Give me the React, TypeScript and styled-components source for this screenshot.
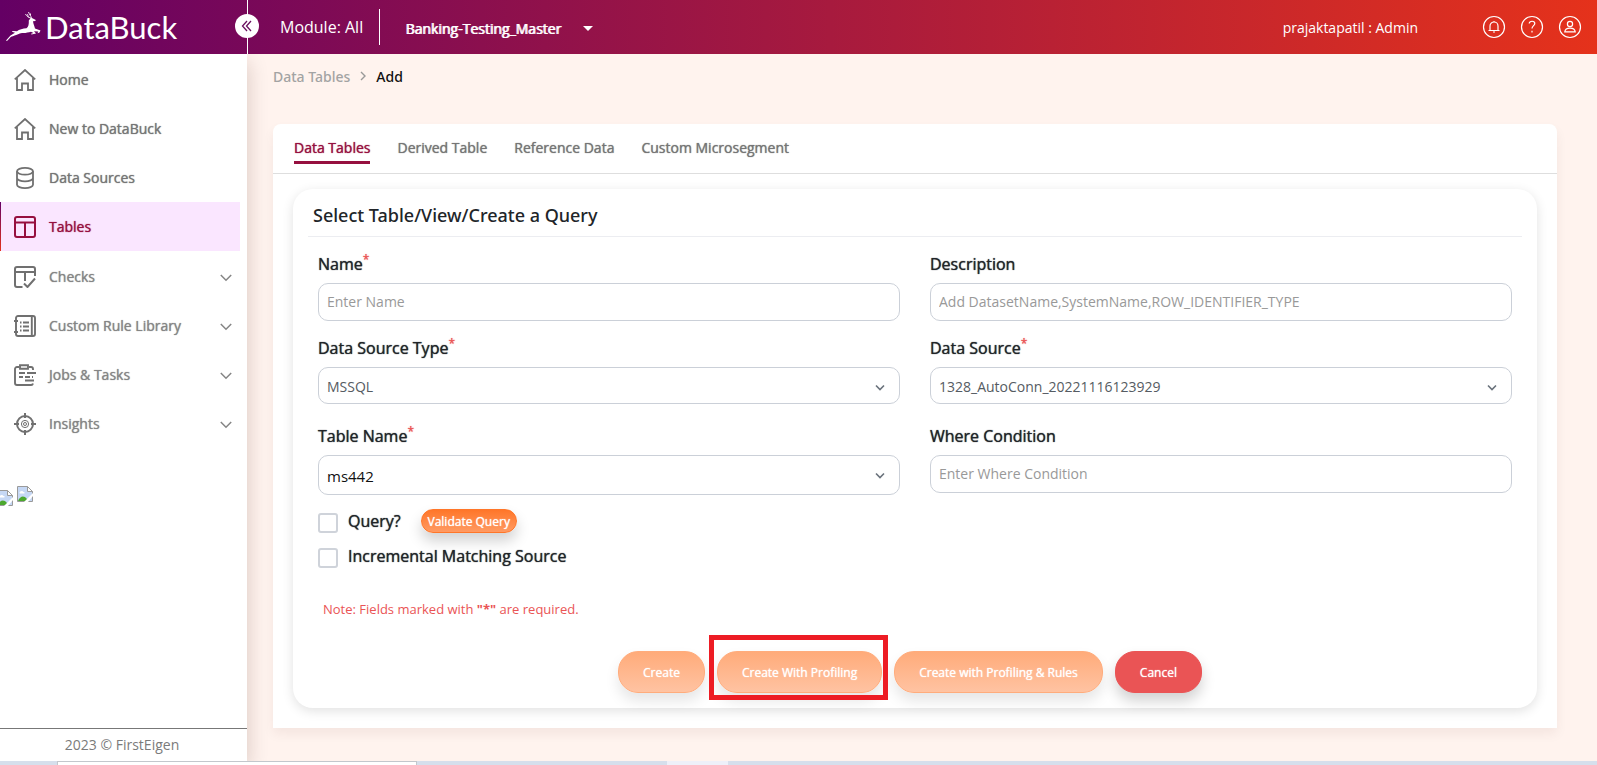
import React from "react";
import styled, { createGlobalStyle, css } from "styled-components";

const GlobalStyle = createGlobalStyle`
  *, *::before, *::after { box-sizing: border-box; }
  body {
    margin: 0;
    font-family: "Open Sans", "Noto Sans", sans-serif;
    font-size: 14px;
    color: #212529;
    background: #fff3ee;
  }
  button, input, select { font-family: inherit; }
  h1, p, ul { margin: 0; padding: 0; }
  ul { list-style: none; }
  a { color: inherit; text-decoration: none; }
`;

const emphasis = css`
  text-shadow: 0 0 1px currentColor;
`;

const Page = styled.div`
  min-height: 100vh;
  display: flex;
  flex-direction: column;
`;

const Header = styled.header`
  display: flex;
  height: 54px;
  color: #fff;
  background: linear-gradient(90deg, #640064 0%, #e5321b 100%);
`;

const Brand = styled.div`
  position: relative;
  display: flex;
  align-items: center;
  width: 248px;
  padding-left: 6px;
  gap: 4px;
  border-right: 1px solid #fff;
`;

const BrandName = styled.span`
  font-family: Lato, "Open Sans", sans-serif;
  font-size: 31px;
  line-height: 52px;
`;

const CollapseButton = styled.button`
  position: absolute;
  right: -12px;
  top: 14px;
  width: 24px;
  height: 24px;
  padding: 0;
  display: flex;
  align-items: center;
  justify-content: center;
  border: 0;
  border-radius: 50%;
  background: #fff;
  color: #6b1060;
`;

const Module = styled.div`
  align-self: center;
  margin-left: 32px;
  padding-right: 16px;
  font-size: 16px;
  line-height: 36px;
  border-right: 1px solid #fff;
`;

const ProjectButton = styled.button`
  display: flex;
  align-items: center;
  gap: 22px;
  margin-left: 25px;
  padding: 3px 0 0;
  border: 0;
  background: none;
  color: #fff;
  font-size: 14px;
  text-shadow: 1px 0 currentColor;
`;

const Account = styled.div`
  display: flex;
  align-items: center;
  margin-left: auto;
  padding-right: 15px;
  font-size: 14px;
`;

const UserName = styled.span`
  padding-right: 64px;
`;

const HeaderIcons = styled.div`
  display: flex;
  gap: 14px;
`;

const IconButton = styled.button`
  display: flex;
  padding: 0;
  border: 0;
  background: none;
  color: #fff;
`;

const Body = styled.div`
  flex: 1;
  display: flex;
`;

const Sidebar = styled.aside`
  flex: 0 0 247px;
  display: flex;
  flex-direction: column;
  background: #fff;
  box-shadow: 0 8px 20px rgba(60, 20, 0, 0.2);
  clip-path: inset(0 -30px 0 0);
`;

const NavList = styled.ul`
  padding-top: 1px;
`;

const NavLink = styled.a<{ $active?: boolean; $group?: boolean }>`
  display: flex;
  align-items: center;
  height: 49px;
  margin-right: 7px;
  padding: ${(p) => (p.$group ? "2px" : "0")} 8px 0 14px;
  gap: 13px;
  color: ${(p) => (p.$group ? "#858585" : "#757575")};
  ${(p) =>
    p.$active &&
    css`
      color: #96103f;
      background: linear-gradient(#640064, #e5321b) left / 1px 100% no-repeat, #fae6ff;
    `}
`;

const NavIcon = styled.span<{ $active?: boolean }>`
  display: flex;
  color: ${(p) => (p.$active ? "#96103f" : "#707070")};
`;

const NavText = styled.span`
  flex: 1;
  ${emphasis}
`;

const Broken = styled.div`
  display: flex;
  gap: 4px;
  margin: 39px 0 0 -3px;
  svg:first-child { margin-top: 4px; }
`;

const Copyright = styled.footer`
  margin-top: auto;
  padding-right: 3px;
  border-top: 1px solid #777;
  line-height: 32px;
  text-align: center;
  color: #7b7b7b;
`;

const Main = styled.main`
  flex: 1;
  min-width: 0;
  padding: 11px 40px 33px 26px;
`;

const Breadcrumb = styled.nav`
  display: flex;
  align-items: center;
  gap: 10px;
  height: 22px;
  font-family: "Noto Sans", sans-serif;
  font-weight: 500;
  color: #a3a3a3;
`;

const Current = styled.span`
  color: #111;
`;

const Card = styled.section`
  margin-top: 37px;
  padding-bottom: 20px;
  background: #fff;
  border-radius: 8px 8px 0 0;
  box-shadow: 0 6px 12px rgba(60, 20, 0, 0.06);
`;

const Tabs = styled.nav`
  display: flex;
  gap: 27px;
  height: 50px;
  padding: 14px 21px 0;
  border-bottom: 1px solid #dedede;
`;

const Tab = styled.a<{ $active?: boolean }>`
  height: 26px;
  line-height: 20px;
  color: ${(p) => (p.$active ? "#96103f" : "#757575")};
  border-bottom: ${(p) => (p.$active ? "3px solid #96103f" : "0")};
  ${emphasis}
`;

const Panel = styled.form`
  margin: 15px 20px 0;
  padding: 12px 15px 15px;
  border-radius: 20px;
  box-shadow: 0 3px 12px rgba(0, 0, 0, 0.12);
`;

const Title = styled.h1`
  padding: 0 5px 7px;
  font-family: "Noto Sans", sans-serif;
  font-size: 18px;
  line-height: 28px;
  font-weight: 500;
  border-bottom: 1px solid #ecedf1;
`;

const Fields = styled.div`
  display: grid;
  grid-template-columns: 1fr 1fr;
  gap: 14px 30px;
  padding: 14px 10px 0;
`;

const Field = styled.div<{ $spaced?: boolean }>`
  padding-top: ${(p) => (p.$spaced ? "5px" : "0")};
`;

const Label = styled.label`
  display: block;
  height: 32px;
  font-size: 16px;
  line-height: 26px;
  ${emphasis}
`;

const Required = styled.sup`
  font-size: 12px;
  line-height: 0;
  color: #ea5455;
`;

const control = css`
  display: block;
  width: 100%;
  padding: 0 8px;
  border: 1px solid #cbd0d8;
  border-radius: 10px;
  background: #fff;
  outline: 0;
  font-size: 14px;
`;

const TextInput = styled.input`
  ${control}
  height: 38px;
  padding-bottom: 2px;
  &::placeholder { color: #999; opacity: 1; }
`;

const SelectBox = styled.div`
  position: relative;
  svg {
    position: absolute;
    right: 15px;
    top: 17px;
    pointer-events: none;
  }
`;

const Select = styled.select<{ $strong?: boolean }>`
  ${control}
  appearance: none;
  height: ${(p) => (p.$strong ? "40px" : "37px")};
  padding-top: 1px;
  color: ${(p) => (p.$strong ? "#111" : "#555b62")};
  font-size: ${(p) => (p.$strong ? "15px" : "14px")};
`;

const Checks = styled.div`
  display: grid;
  gap: 11px;
  padding: 14px 10px 0;
`;

const CheckRow = styled.div`
  display: flex;
  align-items: center;
  height: 24px;
`;

const CheckLabel = styled.label`
  margin: 0 20px 0 10px;
  font-size: 16px;
  line-height: 24px;
  ${emphasis}
`;

const Checkbox = styled.input`
  appearance: none;
  width: 20px;
  height: 20px;
  margin: 4px 0 0;
  border: 2px solid #cfd3da;
  border-radius: 3px;
  background: #fff;
`;

const ValidateButton = styled.button`
  width: 96px;
  height: 24px;
  padding: 0;
  border: 1px solid #ff7629;
  border-radius: 12px;
  background: linear-gradient(#ff7629, #ff9a62);
  box-shadow: 0 8px 14px rgba(0, 0, 0, 0.18);
  color: #fff;
  font-size: 12px;
  ${emphasis}
`;

const Note = styled.p`
  padding: 31px 15px 0;
  font-size: 13px;
  line-height: 20px;
  color: #ea5455;
`;

const Actions = styled.div`
  display: flex;
  justify-content: center;
  gap: 12px;
  padding: 32px 10px 0 0;
`;

const Highlight = styled.div`
  position: relative;
  display: flex;
  &::after {
    content: "";
    position: absolute;
    inset: -16px -6px -7px -8px;
    border: 5px solid #ed1c24;
    pointer-events: none;
  }
`;

const ActionButton = styled.button<{ $danger?: boolean }>`
  height: 42px;
  padding: 0 24px;
  border: 1px solid ${(p) => (p.$danger ? "#ea5455" : "#ffac7c")};
  border-radius: 20px;
  background: ${(p) => (p.$danger ? "#ea5455" : "linear-gradient(#ffab7a, #ffc3a2)")};
  box-shadow: 0 8px 14px rgba(0, 0, 0, ${(p) => (p.$danger ? 0.18 : 0.1)});
  color: #fff;
  font-size: 12px;
  ${emphasis}
`;

const Taskbar = styled.div`
  display: flex;
  height: 4px;
  background: #d6dfec;
`;

const TaskWindow = styled.div`
  width: 360px;
  margin-left: 57px;
  border: 1px solid #c3c7cc;
  border-bottom: 0;
  background: #fff;
`;

const TaskItem = styled.div`
  width: 61px;
  margin-left: 250px;
  background: #eef0f9;
`;

const Svg = ({ size = 22, width = 2, children }: { size?: number; width?: number; children: React.ReactNode }) => (
  <svg width={size} height={size} viewBox={`0 0 ${size} ${size}`} fill="none" stroke="currentColor" strokeWidth={width} aria-hidden="true">
    {children}
  </svg>
);

const HomeIcon = () => (
  <Svg width={1.8}><path d="M.8 10.4 11 1l10.2 9.4M3 9v12h5v-6.500h6V21h5V9" /></Svg>
);
const DatabaseIcon = () => (
  <Svg width={1.8}>
    <ellipse cx="11" cy="4.3" rx="8" ry="3.4" />
    <path d="M3 4.3v13.400c0 1.900 3.600 3.400 8 3.400s8-1.500 8-3.400V4.300M3 11c0 1.900 3.600 3.400 8 3.400s8-1.500 8-3.400" />
  </Svg>
);
const TableIcon = () => (
  <Svg><rect x="1" y="1" width="20" height="20" rx="2" /><path d="M1 6.500h20M11 6.500V21" /></Svg>
);
const ChecksIcon = () => (
  <Svg><path d="M8.500 21H3a2 2 0 0 1-2-2V3a2 2 0 0 1 2-2h16a2 2 0 0 1 2 2v7M1 6h20M11 6v9M10 17.500l3.500 3.500L21 12.500" /></Svg>
);
const RulesIcon = () => (
  <Svg width={1.9}>
    <rect x="2" y="1" width="19" height="20" rx="2" />
    <path d="M17.800 1v20M0 6h4M0 17h4M9 7.500h6M9 11.500h6M9 15.500h6" />
    <path d="M6 7.500h1.500M6 11.500h1.500M6 15.500h1.500" />
  </Svg>
);
const JobsIcon = () => (
  <Svg width={1.9}>
    <path d="M5 3H3a2 2 0 0 0-2 2v14a2 2 0 0 0 2 2h14a2 2 0 0 0 2-1.500M15 3h2a2 2 0 0 1 2 2v1M6 1.200h8v3.600H6z" />
    <path d="M5 9h6M13 9h9M5 13h4M11 13h5M18 13h1M5 13h2M11 16.500h9" />
  </Svg>
);
const InsightsIcon = () => (
  <Svg><circle cx="11" cy="11" r="8" /><path d="M11 0v5M11 17v5M0 11h5M17 11h5" /><circle cx="11" cy="11" r="3.6" strokeWidth="1" /><circle cx="11" cy="11" r="1.5" strokeWidth="1" /></Svg>
);
const ChevronDown = () => (
  <Svg size={12} width={1.5}><path d="M.8 4 6 9.200 11.200 4" /></Svg>
);
const SelectArrow = () => (
  <svg width="10" height="8" viewBox="0 0 10 8" fill="none" stroke="#6a727c" strokeWidth="1.6" aria-hidden="true"><path d="M1 1.500 5 5.500l4-4" /></svg>
);

const Deer = () => (
  <svg width="35" height="30" viewBox="0 0 35 30" fill="#fff" aria-hidden="true">
    <path d="M0 28.500 4.500 23.500 9 20.800 6 19.800 6.500 19 11 19.300C13 17.200 17 16.600 20.500 16.200 22.500 15 23 12 22.800 8.500L25 5.500 29.800 8 29.300 9 27 9.300C27.300 12 28.500 14.500 29 16.500L34.500 18.500 33.500 20.500 31.500 21.200 32.300 19.500 28 19.200 30 21.500 25.500 22.500 25 21.800 27.500 21 25 19.800C22 20.500 19.500 21.300 16 21 13 21.500 10.500 23 5 24.800L1 29Z" />
    <path d="M25 6C22 5.500 20.500 4 19.500 2M22.300 5.200 21.500 2.200M25.500 5.800C25 4 23.500 3 22.500 0M24.500 3.500V1.500" fill="none" stroke="#fff" strokeWidth=".9" />
  </svg>
);

const BrokenImage = () => (
  <svg width="16" height="16" viewBox="0 0 16 16" aria-hidden="true">
    <path d="M.5.5h10l5 5v10H.5z" fill="#c6d8f5" stroke="#9a9a9a" />
    <path d="M2.500 7c0-2 3-3 4-1 1.500 0 1.500 1.500.5 1.500H3z" fill="#fff" />
    <path d="M1 15c2-5 6-6 9-2l2 2z" fill="#4ca82e" />
    <path d="M7 16 16 7v3l-5 6z" fill="#fff" />
    <path d="M10.500.5v5h5z" fill="#fff" stroke="#9a9a9a" />
  </svg>
);

const navItems = [
  { text: "Home", icon: <HomeIcon /> },
  { text: "New to DataBuck", icon: <HomeIcon /> },
  { text: "Data Sources", icon: <DatabaseIcon /> },
  { text: "Tables", icon: <TableIcon />, active: true },
  { text: "Checks", icon: <ChecksIcon />, group: true },
  { text: "Custom Rule Library", icon: <RulesIcon />, group: true },
  { text: "Jobs & Tasks", icon: <JobsIcon />, group: true },
  { text: "Insights", icon: <InsightsIcon />, group: true },
];

const tabs = ["Data Tables", "Derived Table", "Reference Data", "Custom Microsegment"];

type FieldProps = {
  id: string;
  label: string;
  required?: boolean;
  spaced?: boolean;
  children: React.ReactNode;
};

const FormField = ({ id, label, required, spaced, children }: FieldProps) => (
  <Field $spaced={spaced}>
    <Label htmlFor={id}>{label}{required && <Required>*</Required>}</Label>
    {children}
  </Field>
);

const Dropdown = ({ id, value, strong }: { id: string; value: string; strong?: boolean }) => (
  <SelectBox>
    <Select id={id} $strong={strong} defaultValue={value}><option>{value}</option></Select>
    <SelectArrow />
  </SelectBox>
);

export default function App() {
  return (
    <Page>
      <GlobalStyle />
      <Header>
        <Brand>
          <Deer />
          <BrandName>DataBuck</BrandName>
          <CollapseButton aria-label="Collapse menu">
            <Svg size={12} width={1.3}><path d="M6 1 1.500 6 6 11M10 1 5.500 6l4.500 5" /></Svg>
          </CollapseButton>
        </Brand>
        <Module>Module: All</Module>
        <ProjectButton>
          Banking-Testing_Master
          <svg width="10" height="5" viewBox="0 0 10 5" fill="#fff" aria-hidden="true"><path d="M0 0h10L5 5z" /></svg>
        </ProjectButton>
        <Account>
          <UserName>prajaktapatil : Admin</UserName>
          <HeaderIcons>
            <IconButton aria-label="Notifications">
              <Svg size={24} width={1.2}><circle cx="12" cy="12" r="10.5" /><path d="M6.500 15.500h11M8 15.500V11a4 4 0 0 1 8 0v4.500M12 7V6M11 17h2" /></Svg>
            </IconButton>
            <IconButton aria-label="Help">
              <Svg size={24} width={1.2}><circle cx="12" cy="12" r="10.5" /><path d="M9.200 8.500c.3-3 5.600-3 5.600 0 0 2-2.800 2.300-2.800 5M12 15.800v1.700" /></Svg>
            </IconButton>
            <IconButton aria-label="Profile">
              <Svg size={24} width={1.2}><circle cx="12" cy="12" r="10.5" /><circle cx="12" cy="9" r="2.6" /><path d="M6.800 16.800c.5-5 9.900-5 10.400 0z" /></Svg>
            </IconButton>
          </HeaderIcons>
        </Account>
      </Header>
      <Body>
        <Sidebar>
          <nav>
            <NavList>
              {navItems.map((item) => (
                <li key={item.text}>
                  <NavLink href="#" $active={item.active} $group={item.group}>
                    <NavIcon $active={item.active}>{item.icon}</NavIcon>
                    <NavText>{item.text}</NavText>
                    {item.group && <ChevronDown />}
                  </NavLink>
                </li>
              ))}
            </NavList>
          </nav>
          <Broken><BrokenImage /><BrokenImage /></Broken>
          <Copyright>2023 © FirstEigen</Copyright>
        </Sidebar>
        <Main>
          <Breadcrumb>
            <a href="#">Data Tables</a>
            <svg width="6" height="10" viewBox="0 0 6 10" fill="none" stroke="#999" strokeWidth="1.4" aria-hidden="true"><path d="m1 1 4 4-4 4" /></svg>
            <Current>Add</Current>
          </Breadcrumb>
          <Card>
            <Tabs>
              {tabs.map((tab, i) => <Tab key={tab} href="#" $active={i === 0}>{tab}</Tab>)}
            </Tabs>
            <Panel onSubmit={(e) => e.preventDefault()}>
              <Title>Select Table/View/Create a Query</Title>
              <Fields>
                <FormField id="name" label="Name" required>
                  <TextInput id="name" placeholder="Enter Name" />
                </FormField>
                <FormField id="description" label="Description">
                  <TextInput id="description" placeholder="Add DatasetName,SystemName,ROW_IDENTIFIER_TYPE" />
                </FormField>
                <FormField id="source-type" label="Data Source Type" required>
                  <Dropdown id="source-type" value="MSSQL" />
                </FormField>
                <FormField id="source" label="Data Source" required>
                  <Dropdown id="source" value="1328_AutoConn_20221116123929" />
                </FormField>
                <FormField id="table" label="Table Name" required spaced>
                  <Dropdown id="table" value="ms442" strong />
                </FormField>
                <FormField id="where" label="Where Condition" spaced>
                  <TextInput id="where" placeholder="Enter Where Condition" />
                </FormField>
              </Fields>
              <Checks>
                <CheckRow>
                  <Checkbox type="checkbox" id="query" />
                  <CheckLabel htmlFor="query">Query?</CheckLabel>
                  <ValidateButton type="button">Validate Query</ValidateButton>
                </CheckRow>
                <CheckRow>
                  <Checkbox type="checkbox" id="incremental" />
                  <CheckLabel htmlFor="incremental">Incremental Matching Source</CheckLabel>
                </CheckRow>
              </Checks>
              <Note>Note: Fields marked with <b>"*"</b> are required.</Note>
              <Actions>
                <ActionButton type="submit">Create</ActionButton>
                <Highlight><ActionButton type="button">Create With Profiling</ActionButton></Highlight>
                <ActionButton type="button">Create with Profiling &amp; Rules</ActionButton>
                <ActionButton type="button" $danger>Cancel</ActionButton>
              </Actions>
            </Panel>
          </Card>
        </Main>
      </Body>
      <Taskbar><TaskWindow /><TaskItem /></Taskbar>
    </Page>
  );
}
